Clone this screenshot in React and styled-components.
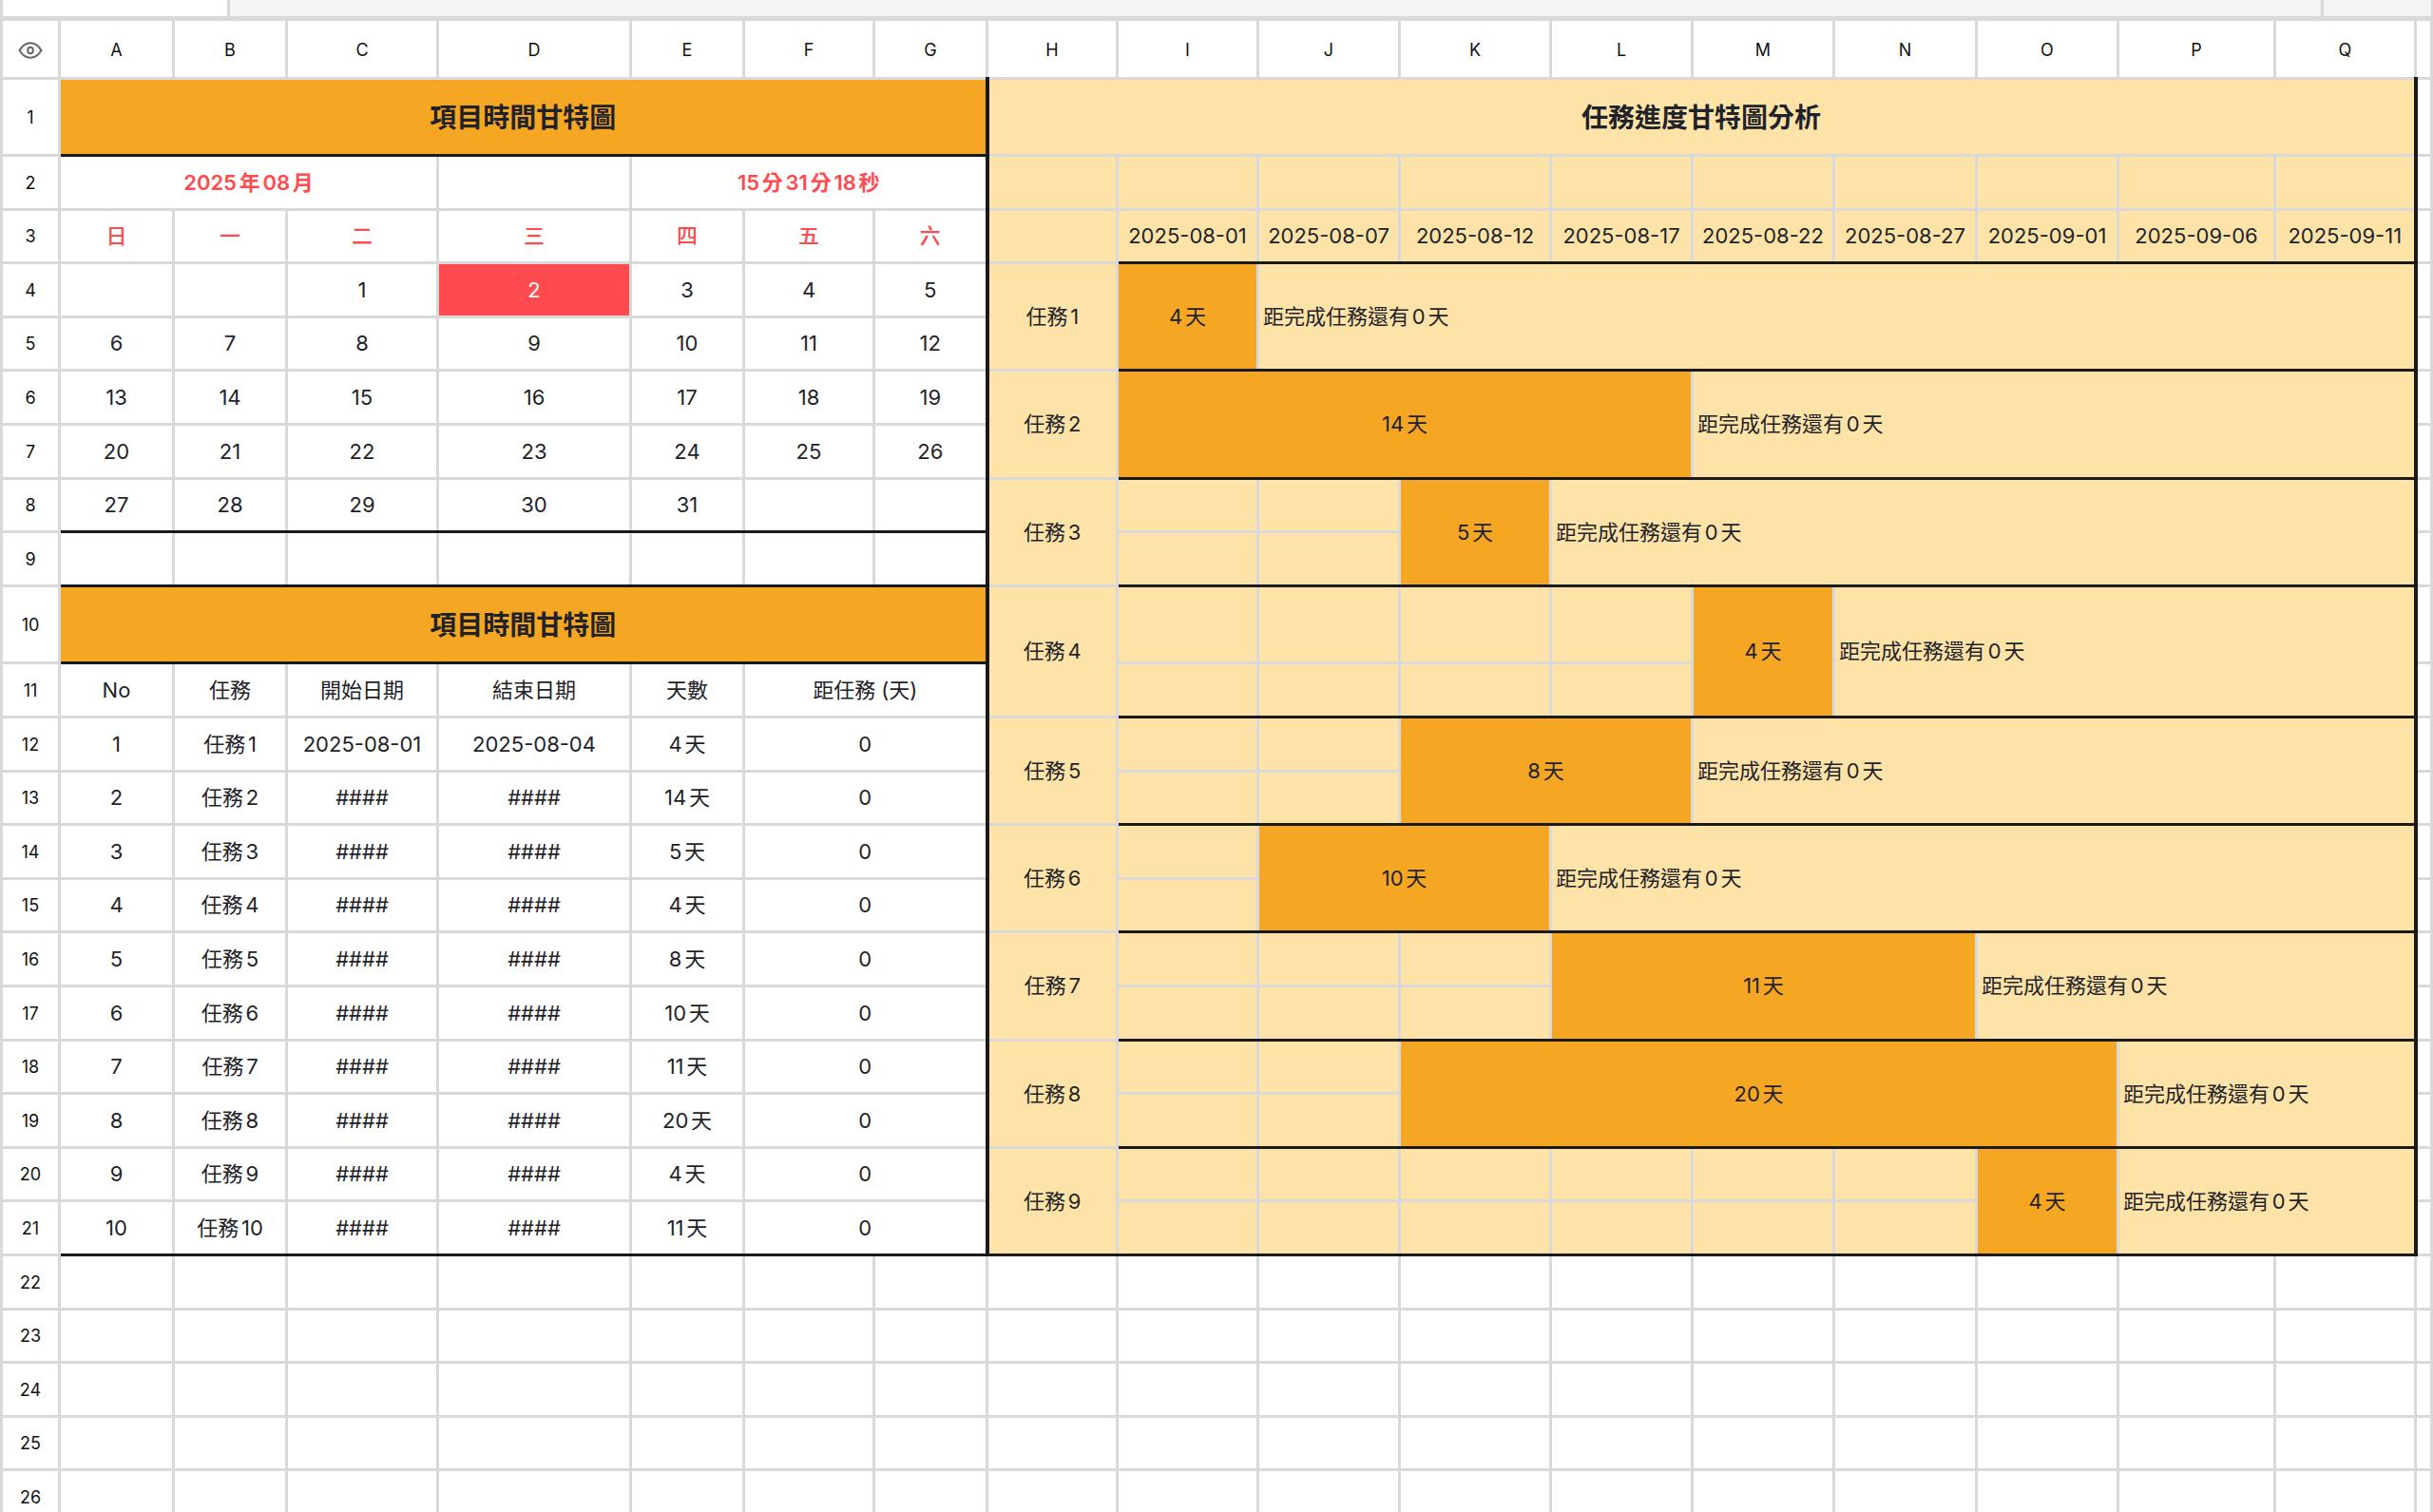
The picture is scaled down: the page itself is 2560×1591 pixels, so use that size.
import React from "react";
import styled, { createGlobalStyle, css } from "styled-components";

const COLUMNS = [
  ["A", 120],
  ["B", 119],
  ["C", 159],
  ["D", 203],
  ["E", 119],
  ["F", 137],
  ["G", 119],
  ["H", 137],
  ["I", 148],
  ["J", 149],
  ["K", 159],
  ["L", 149],
  ["M", 149],
  ["N", 150],
  ["O", 149],
  ["P", 165],
  ["Q", 148],
];

const WEEKDAYS = ["日", "一", "二", "三", "四", "五", "六"];
const TODAY = 2;

const DATES = [
  "2025-08-01",
  "2025-08-07",
  "2025-08-12",
  "2025-08-17",
  "2025-08-22",
  "2025-08-27",
  "2025-09-01",
  "2025-09-06",
  "2025-09-11",
];

const TASKS = [
  { start: "2025-08-01", end: "2025-08-04", days: 4 },
  { start: "####", end: "####", days: 14 },
  { start: "####", end: "####", days: 5 },
  { start: "####", end: "####", days: 4 },
  { start: "####", end: "####", days: 8 },
  { start: "####", end: "####", days: 10 },
  { start: "####", end: "####", days: 11 },
  { start: "####", end: "####", days: 20 },
  { start: "####", end: "####", days: 4 },
  { start: "####", end: "####", days: 11 },
];

// offset = date columns before the bar, span = date columns it covers
const BARS = [
  { offset: 0, span: 1 },
  { offset: 0, span: 4 },
  { offset: 2, span: 1 },
  { offset: 4, span: 1 },
  { offset: 2, span: 2 },
  { offset: 1, span: 2 },
  { offset: 3, span: 3 },
  { offset: 2, span: 5 },
  { offset: 6, span: 1 },
];

const LAST_ROW = 26;
const range = (n) => Array.from({ length: n }, (_, i) => i);

const CalendarCells = ({ row }) => {
  const firstDay = (row - 4) * 7 - 1;
  return WEEKDAYS.map((name, i) => {
    const day = firstDay + i;
    return (
      <Cell
        key={name}
        $today={day === TODAY}
        $heavyBottom={row === 8}
        $heavyRight={i === 6}
      >
        {day > 0 && day <= 31 ? day : ""}
      </Cell>
    );
  });
};

const TaskCells = ({ row }) => {
  const no = row - 11;
  const task = TASKS[no - 1];
  const last = row === 21;
  return (
    <>
      <Cell $heavyBottom={last}>{no}</Cell>
      <Cell $heavyBottom={last}>{`任務${no}`}</Cell>
      <Cell $heavyBottom={last}>{task.start}</Cell>
      <Cell $heavyBottom={last}>{task.end}</Cell>
      <Cell $heavyBottom={last}>{`${task.days}天`}</Cell>
      <Cell colSpan={2} $heavyBottom={last} $heavyRight>
        0
      </Cell>
    </>
  );
};

const LeftCells = ({ row }) => {
  if (row === 1 || row === 10) {
    return (
      <TitleCell colSpan={7} $fill="#f5a623" $heavyBottom $heavyRight>
        項目時間甘特圖
      </TitleCell>
    );
  }
  if (row === 2) {
    return (
      <>
        <ClockCell colSpan={3}>2025年08月</ClockCell>
        <Cell />
        <ClockCell colSpan={3} $heavyRight>
          15分31分18秒
        </ClockCell>
      </>
    );
  }
  if (row === 3) {
    return WEEKDAYS.map((name, i) => (
      <WeekdayCell key={name} $heavyRight={i === 6}>
        {name}
      </WeekdayCell>
    ));
  }
  if (row <= 8) return <CalendarCells row={row} />;
  if (row === 9) {
    return WEEKDAYS.map((name, i) => (
      <Cell key={name} $heavyBottom $heavyRight={i === 6} />
    ));
  }
  if (row === 11) {
    return (
      <>
        <Cell>No</Cell>
        <Cell>任務</Cell>
        <Cell>開始日期</Cell>
        <Cell>結束日期</Cell>
        <Cell>天數</Cell>
        <Cell colSpan={2} $heavyRight>
          距任務 (天)
        </Cell>
      </>
    );
  }
  return <TaskCells row={row} />;
};

const GanttCells = ({ row }) => {
  if (row === 1) {
    return (
      <TitleCell colSpan={10} $fill="#fee3a8" $heavyLeft $heavyRight>
        任務進度甘特圖分析
      </TitleCell>
    );
  }
  if (row === 2 || row === 3) {
    return (
      <>
        <GanttCell $heavyLeft />
        {DATES.map((date, i) => (
          <GanttCell
            key={date}
            $heavyBottom={row === 3}
            $heavyRight={i === DATES.length - 1}
          >
            {row === 3 ? date : ""}
          </GanttCell>
        ))}
      </>
    );
  }

  // every task takes two sheet rows
  const index = Math.floor((row - 4) / 2);
  const { offset, span } = BARS[index];
  if (row % 2 === 1) {
    return range(offset).map((i) => <GanttCell key={i} $heavyBottom />);
  }
  return (
    <>
      <GanttCell
        rowSpan={2}
        $heavyLeft
        $heavyBottom={index === BARS.length - 1}
      >
        {`任務${index + 1}`}
      </GanttCell>
      {range(offset).map((i) => (
        <GanttCell key={i} />
      ))}
      <BarCell rowSpan={2} colSpan={span} $heavyBottom>
        {`${TASKS[index].days}天`}
      </BarCell>
      <NoteCell
        rowSpan={2}
        colSpan={DATES.length - offset - span}
        $heavyBottom
        $heavyRight
      >
        距完成任務還有0天
      </NoteCell>
    </>
  );
};

const App = () => {
  return (
    <>
      <GlobalStyle />
      <Wrapper>
        <FormulaBar>
          <NameBox />
          <FormulaText />
          <FormulaEnd />
        </FormulaBar>
        <Sheet>
          <colgroup>
            <Col $width={61} />
            {COLUMNS.map(([name, width]) => (
              <Col key={name} $width={width} />
            ))}
            <col />
          </colgroup>
          <thead>
            <HeadRow>
              <HeadCell aria-label="顯示">
                <EyeIcon />
              </HeadCell>
              {COLUMNS.map(([name]) => (
                <HeadCell key={name} scope="col">
                  {name}
                </HeadCell>
              ))}
              <HeadCell />
            </HeadRow>
          </thead>
          <tbody>
            {range(LAST_ROW).map((i) => {
              const row = i + 1;
              return (
                <Row key={row}>
                  <HeadCell scope="row">{row}</HeadCell>
                  {row <= 21 ? (
                    <>
                      <LeftCells row={row} />
                      <GanttCells row={row} />
                    </>
                  ) : (
                    COLUMNS.map(([name]) => <Cell key={name} />)
                  )}
                  <Cell $heavyLeft={row <= 21} />
                </Row>
              );
            })}
          </tbody>
        </Sheet>
      </Wrapper>
    </>
  );
};

export default App;

const EyeIcon = () => (
  <Eye viewBox="0 0 26 20">
    <path d="M1.5 10C4.6 4.8 8.4 2.2 13 2.2S21.4 4.8 24.5 10C21.4 15.2 17.6 17.8 13 17.8S4.6 15.2 1.5 10Z" />
    <ellipse cx="13" cy="10" rx="2.8" ry="3.2" />
  </Eye>
);

const GlobalStyle = createGlobalStyle`
  body {
    margin: 0;
    background-color: white;
    color: #1f2329;
    font-family: Inter, "Noto Sans CJK TC", sans-serif;
    font-size: 22px;
    line-height: 32px;
    text-autospace: normal;
  }
`;

const Wrapper = styled.div`
  height: 100vh;
  overflow: hidden;
`;

const FormulaBar = styled.div`
  display: flex;
  height: 17px;
  border-bottom: 5px solid #d9d9d9;
  background-color: #f4f4f4;
`;

const NameBox = styled.div`
  width: 236px;
  border-left: 3px solid #d9d9d9;
  border-right: 3px solid #d9d9d9;
  background-color: white;
`;

const FormulaText = styled.div`
  flex: 1;
`;

const FormulaEnd = styled.div`
  width: 113px;
  border-left: 3px solid #d9d9d9;
  border-right: 2px solid #d9d9d9;
`;

const Sheet = styled.table`
  width: 100%;
  table-layout: fixed;
  border-collapse: collapse;
`;

const Col = styled.col`
  width: ${(props) => props.$width}px;
`;

const HeadRow = styled.tr`
  height: 60px;
`;

const Row = styled.tr`
  height: 57px;
  &:nth-child(5n),
  &:nth-child(5n + 3) {
    height: 56px;
  }
  &:nth-child(1),
  &:nth-child(10) {
    height: 81px;
  }
`;

// the upright heavy edges are wider so that they run unbroken over the grid
const edges = css`
  padding: 0;
  border: 3px solid #d9d9d9;
  ${(props) => props.$heavyBottom && "border-bottom-color: #1a1a1a;"}
  ${(props) => props.$heavyRight && "border-right: 4px solid #1a1a1a;"}
  ${(props) => props.$heavyLeft && "border-left: 4px solid #1a1a1a;"}
`;

const HeadCell = styled.th`
  ${edges}
  padding-top: 2px;
  color: #111;
  font-size: 18px;
  font-weight: 400;
  line-height: 24px;
  ${HeadRow} & {
    padding-top: 4px;
    border-top: none;
  }
`;

const Cell = styled.td`
  ${edges}
  text-align: center;
  white-space: nowrap;
  ${(props) =>
    props.$today &&
    css`
      background-color: #ff4a50;
      color: white;
    `}
`;

const ClockCell = styled(Cell)`
  color: #ff4a50;
  font-weight: 600;
`;

const WeekdayCell = styled(ClockCell)`
  font-weight: 500;
`;

const TitleCell = styled(Cell)`
  padding-top: 2px;
  background-color: ${(props) => props.$fill};
  font-size: 28px;
  font-weight: 600;
`;

const GanttCell = styled(Cell)`
  background-color: #fee3a8;
`;

const BarCell = styled(Cell)`
  background-color: #f5a623;
`;

const NoteCell = styled(GanttCell)`
  padding-left: 4px;
  text-align: left;
`;

const Eye = styled.svg`
  display: block;
  width: 26px;
  height: 20px;
  margin: 0 auto;
  fill: none;
  stroke: #666;
  stroke-width: 2;
`;
